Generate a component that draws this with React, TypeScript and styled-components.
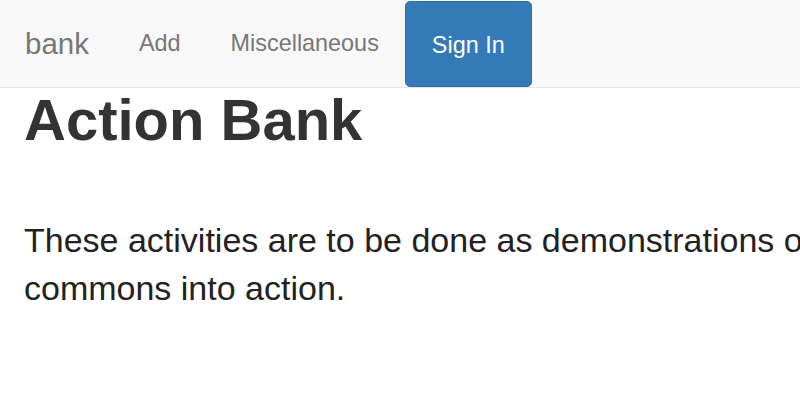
import React from "react";
import styled, { createGlobalStyle } from "styled-components";

const Global = createGlobalStyle`
  html, body { margin: 0; padding: 0; background: #fff; }
  body {
    font-family: "Liberation Sans", Arial, Helvetica, sans-serif;
    color: #333;
    overflow: hidden;
    width: 800px;
    height: 412px;
  }
`;

const Navbar = styled.nav`
  display: flex;
  align-items: stretch;
  height: 87px;
  background: #f8f8f8;
  border-bottom: 1px solid #e7e7e7;
`;

const Brand = styled.a`
  display: flex;
  align-items: center;
  padding: 0 25px;
  font-size: 29.5px;
  color: #777;
  text-decoration: none;
`;

const NavLink = styled.a<{ $active?: boolean }>`
  display: flex;
  align-items: center;
  padding: 0 25px;
  font-size: 23.4px;
  color: ${(p) => (p.$active ? "#fff" : "#777")};
  text-decoration: none;
`;

const SignIn = styled(NavLink)`
  margin: 1px 0 0 1px;
  padding: 2px 26px 0;
  background: #337ab7;
  border: 1px solid #2e6da4;
  border-radius: 5px;
  color: #fff;
`;

const Main = styled.main`
  padding: 0 24px;
`;

const Title = styled.h1`
  margin: 0;
  font-size: 58px;
  line-height: 1.1;
  font-weight: 700;
  color: #333;
`;

const Lead = styled.p`
  margin: 64px 0 0;
  font-size: 34px;
  line-height: 48px;
  font-weight: 300;
  color: #222;
  white-space: nowrap;
`;

export default function App() {
  return (
    <>
      <Global />
      <Navbar>
        <Brand href="#">bank</Brand>
        <NavLink href="#">Add</NavLink>
        <NavLink href="#">Miscellaneous</NavLink>
        <SignIn href="#" $active>
          Sign In
        </SignIn>
      </Navbar>
      <Main>
        <Title>Action Bank</Title>
        <Lead>
          These activities are to be done as demonstrations of
          <br />
          commons into action.
        </Lead>
      </Main>
    </>
  );
}
